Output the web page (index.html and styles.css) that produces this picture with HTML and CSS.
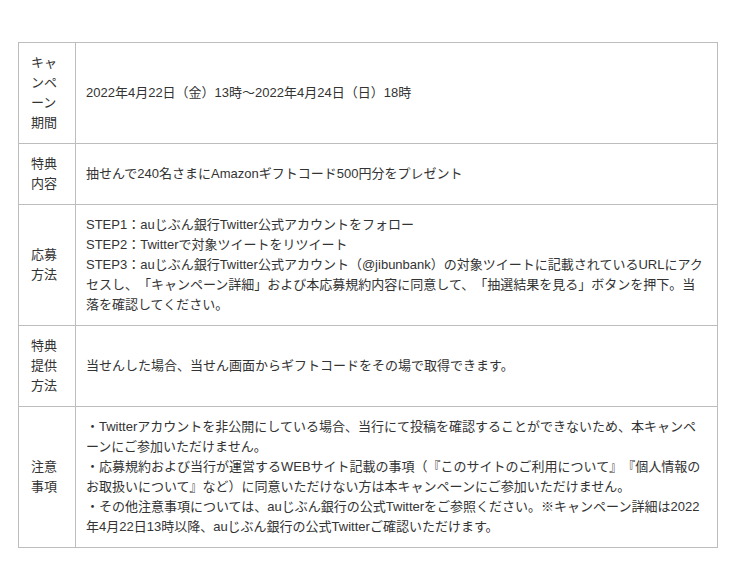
FILE: index.html
```html
<!DOCTYPE html>
<html lang="ja">
<head>
<meta charset="utf-8">
<link rel="stylesheet" href="styles.css">
</head>
<body>
<div class="page">
<table class="info">
<tr><th>キャンペーン期間</th><td>2022年4月22日（金）13時〜2022年4月24日（日）18時</td></tr>
<tr><th>特典内容</th><td>抽せんで240名さまにAmazonギフトコード500円分をプレゼント</td></tr>
<tr><th>応募方法</th><td>STEP1：auじぶん銀行Twitter公式アカウントをフォロー<br>STEP2：Twitterで対象ツイートをリツイート<br>STEP3：auじぶん銀行Twitter公式アカウント（@jibunbank）の対象ツイートに記載されているURLにアクセスし、「キャンペーン詳細」および本応募規約内容に同意して、「抽選結果を見る」ボタンを押下。当落を確認してください。</td></tr>
<tr><th>特典提供方法</th><td>当せんした場合、当せん画面からギフトコードをその場で取得できます。</td></tr>
<tr><th>注意事項</th><td>・Twitterアカウントを非公開にしている場合、当行にて投稿を確認することができないため、本キャンペーンにご参加いただけません。<br>・応募規約および当行が運営するWEBサイト記載の事項（『このサイトのご利用について』『個人情報のお取扱いについて』など）に同意いただけない方は本キャンペーンにご参加いただけません。<br>・その他注意事項については、auじぶん銀行の公式Twitterをご参照ください。※キャンペーン詳細は2022年4月22日13時以降、auじぶん銀行の公式Twitterご確認いただけます。</td></tr>
</table>
</div>
</body>
</html>
```
FILE: styles.css
```css
html, body {
  margin: 0;
  padding: 0;
  background: #fff;
}
.page {
  padding: 42px 0 0 18px;
}
.info {
  width: 700px;
  border-collapse: collapse;
  font-family: "Liberation Sans", "Noto Sans CJK JP", sans-serif;
  font-size: 13px;
  line-height: 20px;
  color: #333;
  text-spacing-trim: space-all;
}
.info th,
.info td {
  border: 1px solid #bdbdbd;
  padding: 10px 13px 10px 10px;
  text-align: left;
  vertical-align: middle;
  font-weight: normal;
}
.info th {
  width: 32px;
  padding: 10px 12px;
}
```
